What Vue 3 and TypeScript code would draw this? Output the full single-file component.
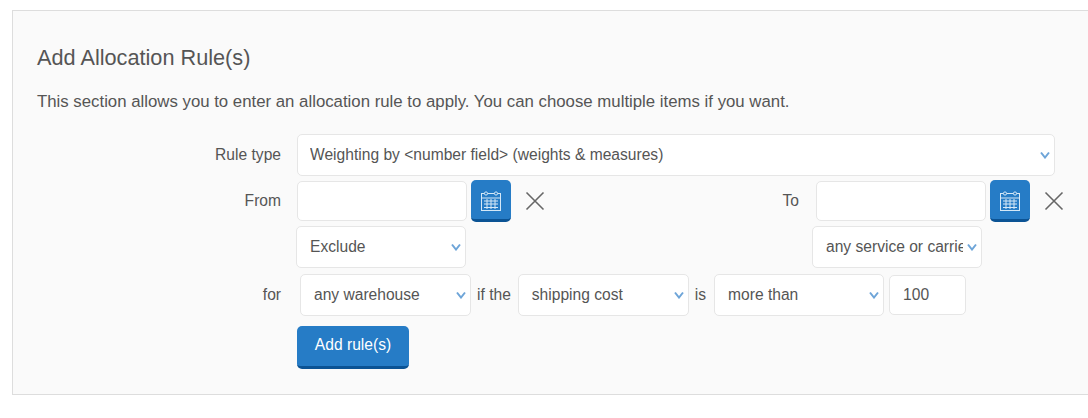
<script setup lang="ts">
import { ref } from "vue";

const ruleType = ref("Weighting by <number field> (weights & measures)");
const mode = ref("Exclude");
const carrier = ref("any service or carrier");
const warehouse = ref("any warehouse");
const metric = ref("shipping cost");
const comparison = ref("more than");
const amount = ref("100");
const fromDate = ref("");
const toDate = ref("");
</script>

<template>
  <section class="panel">
    <h2 class="title">Add Allocation Rule(s)</h2>
    <p class="intro">This section allows you to enter an allocation rule to apply. You can choose multiple items if you want.</p>

    <div class="row row-type">
      <label class="label">Rule type</label>
      <div class="select-wrap wide">
        <select v-model="ruleType">
          <option>Weighting by &lt;number field&gt; (weights &amp; measures)</option>
        </select>
        <svg class="chev" viewBox="0 0 10 8"><path d="M1 1.5 5 6.5 9 1.5" /></svg>
      </div>
    </div>

    <div class="row row-dates">
      <label class="label">From</label>
      <input v-model="fromDate" class="field date" type="text" />
      <button class="cal" type="button" aria-label="Pick from date">
        <svg viewBox="0 0 20 20"><rect x="0.5" y="2.5" width="19" height="17" /><path d="M0.5 7h19M3 10h14M3 13h14M3 16.5h14M6 8v10M10 8v10M14 8v10" /><circle cx="5" cy="2.5" r="1.6" /><circle cx="15" cy="2.5" r="1.6" /></svg>
      </button>
      <svg class="clear" viewBox="0 0 20 20"><path d="M1.5 1.5 18.5 18.5M18.5 1.5 1.5 18.5" /></svg>
      <label class="label to-label">To</label>
      <input v-model="toDate" class="field date" type="text" />
      <button class="cal" type="button" aria-label="Pick to date">
        <svg viewBox="0 0 20 20"><rect x="0.5" y="2.5" width="19" height="17" /><path d="M0.5 7h19M3 10h14M3 13h14M3 16.5h14M6 8v10M10 8v10M14 8v10" /><circle cx="5" cy="2.5" r="1.6" /><circle cx="15" cy="2.5" r="1.6" /></svg>
      </button>
      <svg class="clear" viewBox="0 0 20 20"><path d="M1.5 1.5 18.5 18.5M18.5 1.5 1.5 18.5" /></svg>
    </div>

    <div class="row row-scope">
      <div class="select-wrap w170">
        <select v-model="mode"><option>Exclude</option></select>
        <svg class="chev" viewBox="0 0 10 8"><path d="M1 1.5 5 6.5 9 1.5" /></svg>
      </div>
      <div class="select-wrap w170 carrier">
        <select v-model="carrier"><option>any service or carrier</option></select>
        <svg class="chev" viewBox="0 0 10 8"><path d="M1 1.5 5 6.5 9 1.5" /></svg>
      </div>
    </div>

    <div class="row row-cond">
      <label class="label">for</label>
      <div class="select-wrap w171 first">
        <select v-model="warehouse"><option>any warehouse</option></select>
        <svg class="chev" viewBox="0 0 10 8"><path d="M1 1.5 5 6.5 9 1.5" /></svg>
      </div>
      <span class="word if">if the</span>
      <div class="select-wrap w171">
        <select v-model="metric"><option>shipping cost</option></select>
        <svg class="chev" viewBox="0 0 10 8"><path d="M1 1.5 5 6.5 9 1.5" /></svg>
      </div>
      <span class="word is">is</span>
      <div class="select-wrap w170">
        <select v-model="comparison"><option>more than</option></select>
        <svg class="chev" viewBox="0 0 10 8"><path d="M1 1.5 5 6.5 9 1.5" /></svg>
      </div>
      <input v-model="amount" class="field amount" type="text" />
    </div>

    <button class="submit" type="button">Add rule(s)</button>
  </section>
</template>

<style>
html,
body {
  margin: 0;
  background: #fff;
  overflow: hidden;
}
</style>

<style scoped>
.panel {
  box-sizing: border-box;
  width: 1090px;
  height: 385px;
  margin: 10px 0 0 12px;
  padding: 34px 24px 0;
  background: #fafafa;
  border: 1px solid #ddd;
  color: #555;
  font: 15.6px/20px "Liberation Sans", Arial, sans-serif;
}
.title {
  margin: 0;
  font-size: 21.7px;
  line-height: 26px;
  font-weight: 400;
}
.intro {
  margin: 21px 0 0;
  font-size: 16.8px;
}
.row {
  display: flex;
  align-items: center;
}
.row-type {
  margin-top: 22px;
}
.row-dates {
  margin-top: 4px;
  height: 42px;
}
.row-scope {
  margin-top: 4px;
  padding-left: 259px;
}
.row-cond {
  margin-top: 6px;
}
.label {
  flex: none;
  box-sizing: border-box;
  width: 244px;
  margin-right: 16px;
  text-align: right;
}
.to-label {
  width: 60px;
  margin-left: 194px;
  margin-right: 17px;
}
.select-wrap {
  position: relative;
  flex: none;
  height: 42px;
}
.wide {
  width: 758px;
}
.wide select {
  padding-left: 12px;
}
.w170 {
  width: 170px;
}
.w171 {
  width: 171px;
}
.first {
  margin-left: 3px;
}
.carrier {
  margin-left: 346px;
}
select {
  appearance: none;
  box-sizing: border-box;
  width: 100%;
  height: 100%;
  margin: 0;
  padding: 0 14px 0 13px;
  border: 1px solid #e6e6e6;
  border-radius: 5px;
  background: #fff;
  color: #555;
  font: inherit;
  outline: none;
}
.carrier select {
  padding-right: 18px;
}
.chev {
  position: absolute;
  top: 17px;
  right: 5px;
  width: 10px;
  height: 8px;
  pointer-events: none;
}
.chev path {
  fill: none;
  stroke: #6ea5d8;
  stroke-width: 2;
}
.field {
  box-sizing: border-box;
  flex: none;
  height: 40px;
  margin: 0;
  padding: 0 13px;
  border: 1px solid #e6e6e6;
  border-radius: 5px;
  background: #fff;
  color: #555;
  font: inherit;
  outline: none;
}
.date {
  width: 170px;
}
.cal {
  flex: none;
  display: flex;
  align-items: center;
  justify-content: center;
  box-sizing: border-box;
  width: 40px;
  height: 42px;
  margin-left: 4px;
  padding: 3px 0 0;
  border: 0;
  border-bottom: 3px solid #0b5394;
  border-radius: 5px;
  background: #267cc6;
}
.cal svg {
  width: 20px;
  height: 20px;
}
.cal rect,
.cal path,
.cal circle {
  fill: none;
  stroke: #d5e8f7;
  stroke-width: 1;
}
.cal circle {
  fill: #267cc6;
}
.clear {
  flex: none;
  width: 20px;
  height: 20px;
  margin-left: 14px;
}
.clear path {
  fill: none;
  stroke: #666;
  stroke-width: 1.6;
}
.word {
  flex: none;
}
.if {
  margin: 0 7px 0 6px;
}
.is {
  margin: 0 8px 0 6px;
}
.amount {
  width: 77px;
  margin-left: 5px;
}
.submit {
  display: block;
  box-sizing: border-box;
  width: 112px;
  height: 43px;
  margin: 10px 0 0 260px;
  padding: 0 0 3px;
  border: 0;
  border-bottom: 3px solid #0b5394;
  border-radius: 5px;
  background: #267cc6;
  color: #fff;
  font: inherit;
}
</style>
